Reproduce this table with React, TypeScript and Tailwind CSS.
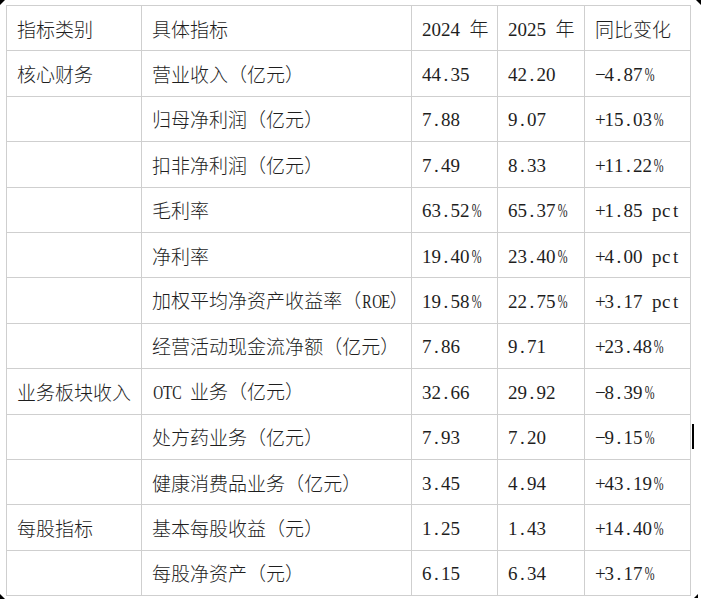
import React from "react";

type Row = [string, string, string, string, string];

const rows: Row[] = [
  ["核心财务", "营业收入（亿元）", "44.35", "42.20", "-4.87%"],
  ["", "归母净利润（亿元）", "7.88", "9.07", "+15.03%"],
  ["", "扣非净利润（亿元）", "7.49", "8.33", "+11.22%"],
  ["", "毛利率", "63.52%", "65.37%", "+1.85 pct"],
  ["", "净利率", "19.40%", "23.40%", "+4.00 pct"],
  ["", "加权平均净资产收益率（ROE）", "19.58%", "22.75%", "+3.17 pct"],
  ["", "经营活动现金流净额（亿元）", "7.86", "9.71", "+23.48%"],
  ["业务板块收入", "OTC 业务（亿元）", "32.66", "29.92", "-8.39%"],
  ["", "处方药业务（亿元）", "7.93", "7.20", "-9.15%"],
  ["", "健康消费品业务（亿元）", "3.45", "4.94", "+43.19%"],
  ["每股指标", "基本每股收益（元）", "1.25", "1.43", "+14.40%"],
  ["", "每股净资产（元）", "6.15", "6.34", "+3.17%"],
];

const header: Row = ["指标类别", "具体指标", "2024 年", "2025 年", "同比变化"];

const narrow: Record<string, string> = {
  "%": "scale-x-[0.62]",
  O: "scale-x-[0.72]",
  T: "scale-x-[0.8]",
  C: "scale-x-[0.74]",
  R: "scale-x-[0.74]",
  E: "scale-x-[0.8]",
};

function Txt({ s }: { s: string }) {
  return (
    <span className="whitespace-nowrap">
      {Array.from(s).map((ch, i) => {
        const ascii = ch.charCodeAt(0) < 128;
        if (!ascii) {
          return (
            <span key={i} className="[font-family:'Noto_Sans_CJK_SC',sans-serif]">
              {ch}
            </span>
          );
        }
        return (
          <span
            key={i}
            className={`inline-block w-[9.5px] text-center [font-family:'Liberation_Serif',serif] ${narrow[ch] ?? ""}`}
          >
            {ch === " " ? "\u00a0" : ch === "-" ? "\u2212" : ch}
          </span>
        );
      })}
    </span>
  );
}

const cell =
  "border border-[#cfcfcf] h-[45.4px] pl-[10px] pr-0 py-0 text-left align-middle font-light";

export default function App() {
  return (
    <div className="relative w-[701px] h-[599px] overflow-hidden bg-white text-[19px] leading-none text-[#1e1e1e] [font-family:'Noto_Sans_CJK_SC',sans-serif]">
      <div className="h-[5px]" />
      <table className="ml-[6px] border-collapse table-fixed w-[684px]">
        <colgroup>
          <col className="w-[135px]" />
          <col className="w-[270px]" />
          <col className="w-[86px]" />
          <col className="w-[87px]" />
          <col className="w-[106px]" />
        </colgroup>
        <tbody>
          <tr>
            {header.map((h, i) => (
              <td key={i} className={cell}>
                <Txt s={h} />
              </td>
            ))}
          </tr>
          {rows.map((r, ri) => (
            <tr key={ri}>
              {r.map((c, ci) => (
                <td key={ci} className={cell}>
                  <Txt s={c} />
                </td>
              ))}
            </tr>
          ))}
        </tbody>
      </table>

      {/* selection corner handles */}
      <div className="absolute left-0 top-0 w-0 h-0 border-t-[5px] border-r-[5px] border-t-black border-r-transparent" />
      <div className="absolute right-0 top-0 w-0 h-0 border-t-[5px] border-l-[5px] border-t-black border-l-transparent" />
      <div className="absolute left-0 top-[594px] w-0 h-0 border-b-[5px] border-r-[5px] border-b-black border-r-transparent" />
      <div className="absolute left-[694px] top-[594px] w-0 h-0 border-b-[4px] border-l-[4px] border-b-black border-l-transparent" />
      {/* text cursor */}
      <div className="absolute left-[692px] top-[424px] w-[2px] h-[25px] bg-black" />
    </div>
  );
}
